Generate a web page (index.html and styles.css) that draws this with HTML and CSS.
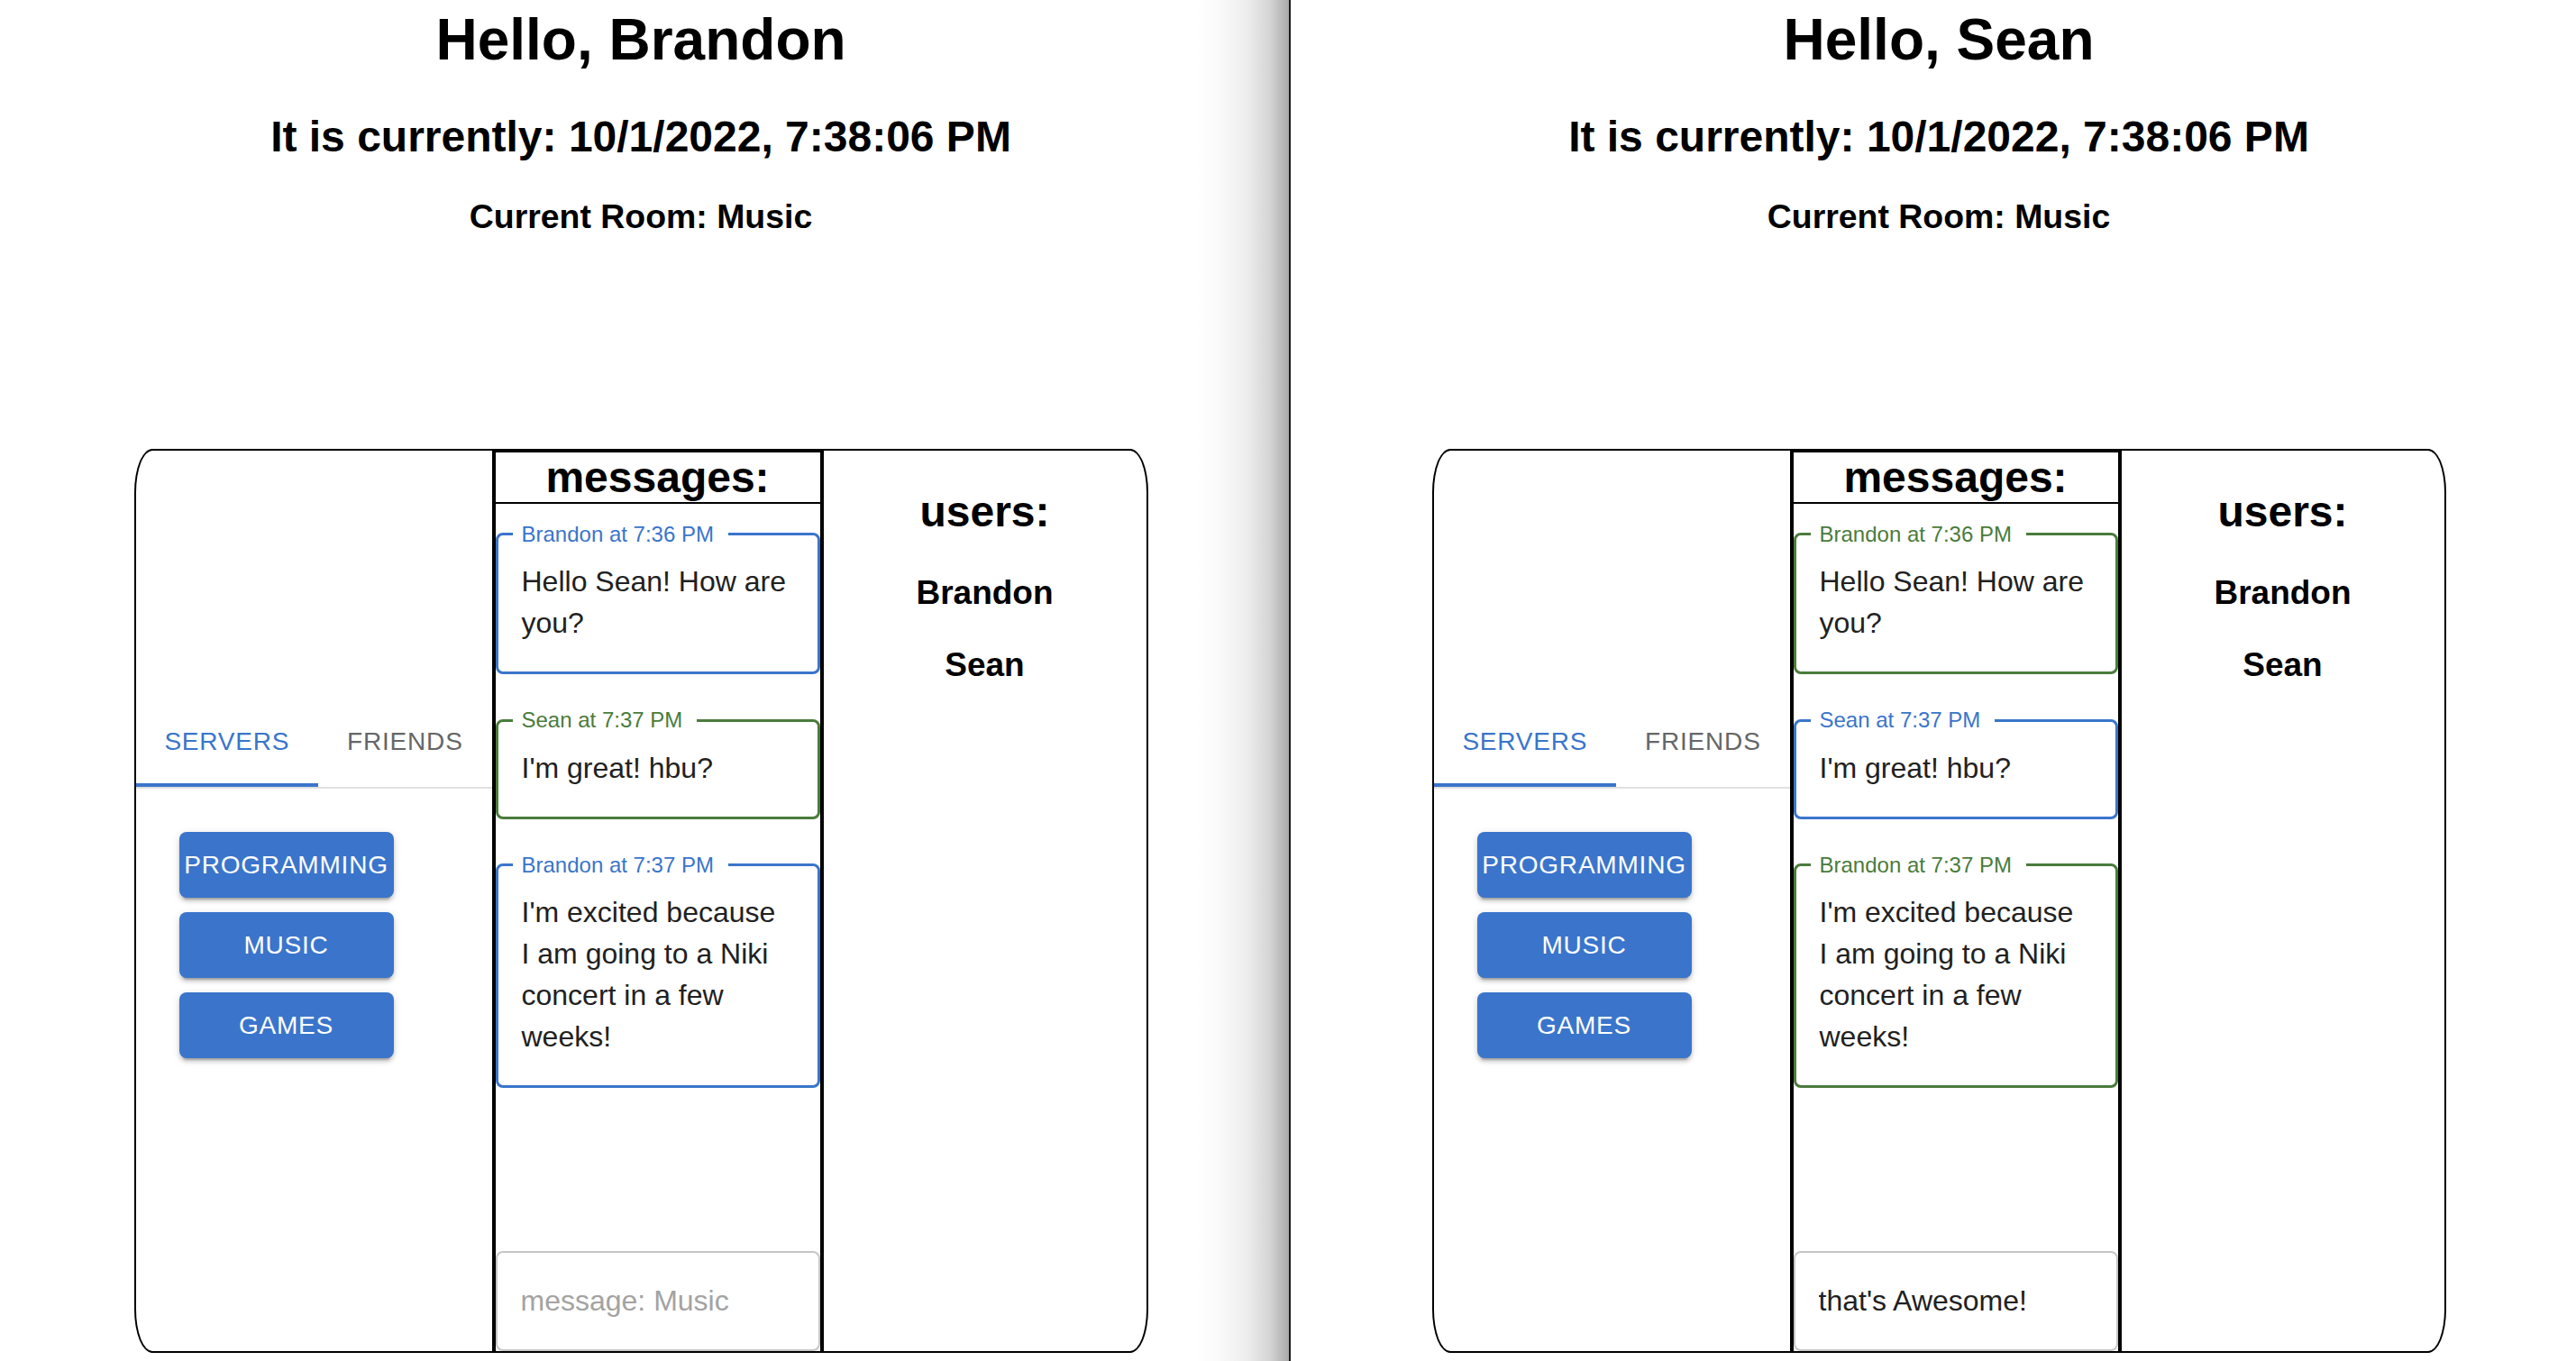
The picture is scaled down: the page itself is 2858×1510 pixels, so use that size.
FILE: index.html
```html
<!DOCTYPE html>
<html lang="en">
<head>
<meta charset="utf-8">
<title>Chat</title>
<link rel="stylesheet" href="styles.css">
</head>
<body>
<div class="screen">
  <section class="pane pane-left">
    <div class="app">
      <h1 class="hello">Hello, Brandon</h1>
      <h2 class="clock">It is currently: 10/1/2022, 7:38:06 PM</h2>
      <h3 class="room-title">Current Room: Music</h3>
      <div class="chat">
        <aside class="sidebar">
          <div class="tabs">
            <div class="tab tab-active">Servers</div>
            <div class="tab">Friends</div>
          </div>
          <div class="rooms">
            <button class="room">Programming</button>
            <button class="room">Music</button>
            <button class="room">Games</button>
          </div>
        </aside>
        <main class="messages">
          <h2 class="messages-title">messages:</h2>
          <div class="message-list">
            <fieldset class="msg msg-blue">
              <legend>Brandon at 7:36 PM</legend>
              <p>Hello Sean! How are you?</p>
            </fieldset>
            <fieldset class="msg msg-green">
              <legend>Sean at 7:37 PM</legend>
              <p>I'm great! hbu?</p>
            </fieldset>
            <fieldset class="msg msg-blue">
              <legend>Brandon at 7:37 PM</legend>
              <p>I'm excited because I am going to a Niki concert in a few weeks!</p>
            </fieldset>
          </div>
          <input class="composer" type="text" placeholder="message: Music">
        </main>
        <aside class="users">
          <h2 class="users-title">users:</h2>
          <h4 class="user">Brandon</h4>
          <h4 class="user">Sean</h4>
        </aside>
      </div>
    </div>
  </section>
  <section class="pane pane-right">
    <div class="app">
      <h1 class="hello">Hello, Sean</h1>
      <h2 class="clock">It is currently: 10/1/2022, 7:38:06 PM</h2>
      <h3 class="room-title">Current Room: Music</h3>
      <div class="chat">
        <aside class="sidebar">
          <div class="tabs">
            <div class="tab tab-active">Servers</div>
            <div class="tab">Friends</div>
          </div>
          <div class="rooms">
            <button class="room">Programming</button>
            <button class="room">Music</button>
            <button class="room">Games</button>
          </div>
        </aside>
        <main class="messages">
          <h2 class="messages-title">messages:</h2>
          <div class="message-list">
            <fieldset class="msg msg-green">
              <legend>Brandon at 7:36 PM</legend>
              <p>Hello Sean! How are you?</p>
            </fieldset>
            <fieldset class="msg msg-blue">
              <legend>Sean at 7:37 PM</legend>
              <p>I'm great! hbu?</p>
            </fieldset>
            <fieldset class="msg msg-green">
              <legend>Brandon at 7:37 PM</legend>
              <p>I'm excited because I am going to a Niki concert in a few weeks!</p>
            </fieldset>
          </div>
          <input class="composer" type="text" placeholder="message: Music" value="that's Awesome!">
        </main>
        <aside class="users">
          <h2 class="users-title">users:</h2>
          <h4 class="user">Brandon</h4>
          <h4 class="user">Sean</h4>
        </aside>
      </div>
    </div>
  </section>
</div>
</body>
</html>
```

FILE: styles.css
```css
:root {
  --blue: #3a75cb;
  --green: #4a7c3c;
  --ink: #212121;
}

* { box-sizing: border-box; }

html, body {
  margin: 0;
  padding: 0;
  background: #fff;
}

body {
  font-family: "Liberation Sans", Arial, Helvetica, sans-serif;
  color: #000;
}

.screen {
  display: flex;
  width: 2858px;
  height: 1510px;
  overflow: hidden;
}

.pane {
  flex: none;
  height: 1510px;
}

.pane-left {
  width: 1432px;
  border-right: 2px solid #1a1a1a;
  background: #fff linear-gradient(to right,
      rgba(0,0,0,0) 0%,
      rgba(0,0,0,0.02) 25%,
      rgba(0,0,0,0.07) 55%,
      rgba(0,0,0,0.17) 80%,
      rgba(0,0,0,0.34) 100%) no-repeat right top / 104px 100%;
}

.pane-right {
  width: 1438px;
}

.app {
  width: 1422px;
  padding-top: 7px;
  text-align: center;
}

.pane-right .app { width: 1438px; }

.hello {
  margin: 0 0 43px;
  font-size: 64px;
  line-height: 74px;
  font-weight: 700;
}

.clock {
  margin: 0 0 40px;
  font-size: 48px;
  line-height: 55px;
  font-weight: 700;
}

.room-title {
  margin: 0;
  font-size: 37.44px;
  line-height: 43px;
  font-weight: 700;
}

.chat {
  display: flex;
  width: 1125px;
  height: 1003px;
  margin: 236px auto 0;
  border: 2px solid #000;
  border-radius: 20px / 48px;
  text-align: left;
}

/* left column */
.sidebar {
  flex: none;
  width: 395px;
  display: flex;
  flex-direction: column;
  justify-content: center;
}

.tabs {
  display: flex;
  border-bottom: 2px solid #e0e0e0;
}

.tab {
  height: 96px;
  min-width: 180px;
  padding: 0 32px;
  display: flex;
  align-items: center;
  justify-content: center;
  font-size: 28px;
  font-weight: 500;
  letter-spacing: 0.8px;
  text-transform: uppercase;
  color: #666;
  border-bottom: 4px solid transparent;
}

.tab-active {
  color: var(--blue);
  border-bottom-color: var(--blue);
}

.rooms {
  display: flex;
  flex-direction: column;
  align-items: flex-start;
  gap: 16px;
  padding: 48px;
}

.room {
  width: 238px;
  height: 73px;
  padding: 0;
  border: 0;
  border-radius: 8px;
  background: var(--blue);
  color: #fff;
  font-family: "Liberation Sans", Arial, Helvetica, sans-serif;
  font-size: 28px;
  font-weight: 500;
  letter-spacing: 0.8px;
  text-transform: uppercase;
  box-shadow: 0 6px 2px -4px rgba(0,0,0,0.2),
              0 4px 4px 0 rgba(0,0,0,0.14),
              0 2px 10px 0 rgba(0,0,0,0.12);
}

/* messages column */
.messages {
  flex: none;
  width: 368px;
  display: flex;
  flex-direction: column;
  border-left: 4px solid #000;
  border-right: 4px solid #000;
}

.messages-title {
  margin: 0;
  font-size: 48px;
  line-height: 55px;
  font-weight: 700;
  text-align: center;
  border-top: 2px solid #000;
  border-bottom: 2px solid #000;
}

.message-list {
  flex: 1;
  padding-top: 21.5px;
}

.msg {
  margin: 0;
  min-width: 0;
  border: 3px solid;
  border-radius: 8px;
  padding: 17.5px 33px 31px 26px;
}

.msg + .msg { margin-top: 39px; }

.msg legend {
  margin-left: -10px;
  padding: 0 16px 0 10px;
  font-size: 24px;
  line-height: 24px;
}

.msg p {
  margin: 0;
  font-size: 32px;
  line-height: 46px;
  color: var(--ink);
}

.msg-blue { border-color: var(--blue); }
.msg-blue legend { color: var(--blue); }
.msg-green { border-color: var(--green); }
.msg-green legend { color: var(--green); }

.composer {
  display: block;
  width: 100%;
  height: 111px;
  margin: 0;
  padding: 0 26px;
  border: 2px solid #c6c6c6;
  border-radius: 8px;
  background: #fff;
  font-family: "Liberation Sans", Arial, Helvetica, sans-serif;
  font-size: 32px;
  color: var(--ink);
  outline: none;
}

.composer::placeholder {
  color: #a3a3a3;
  opacity: 1;
}

/* users column */
.users {
  flex: 1;
  text-align: center;
}

.users-title {
  margin: 40px 0 41px;
  font-size: 48px;
  line-height: 55px;
  font-weight: 700;
}

.user {
  margin: 37px 0;
  font-size: 37px;
  line-height: 43px;
  font-weight: 700;
}
```
